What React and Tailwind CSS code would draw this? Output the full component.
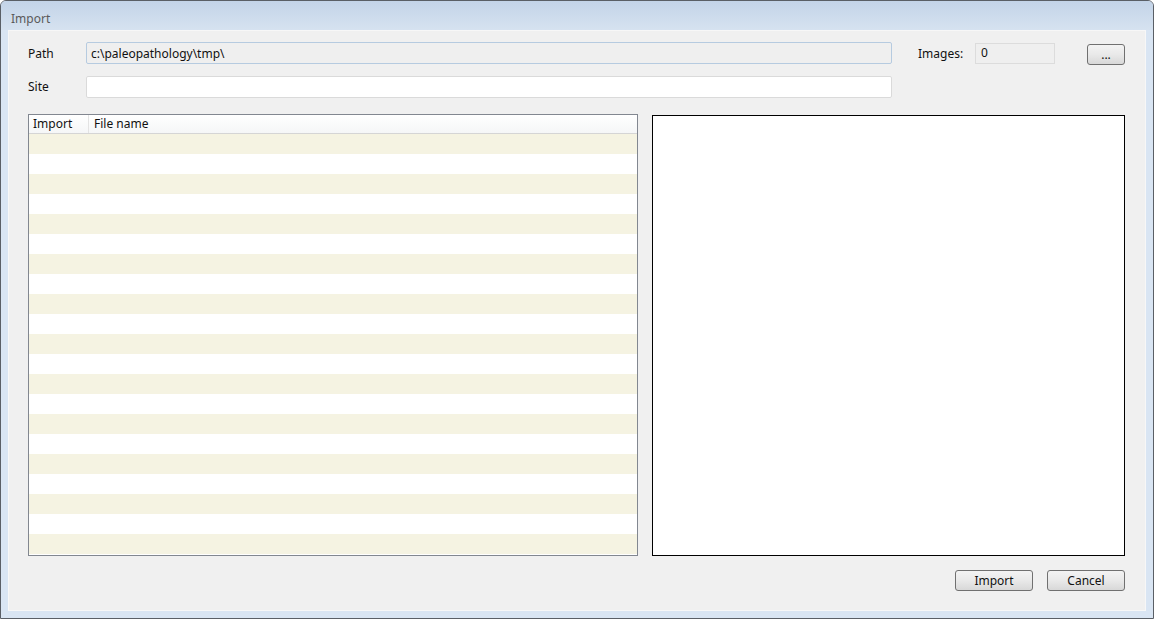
import React from 'react';

const ROWS = 21;

const WinButton = ({ children, className = '' }) => (
  <button
    className={`h-[21px] rounded-[3px] border border-[#707070] bg-gradient-to-b from-[#f3f3f3] via-[#e9e9e9] to-[#d8d8d8] text-[12px] text-[#111] leading-none ${className}`}
  >
    {children}
  </button>
);

const App = () => {
  return (
    <div
      className="w-[1154px] h-[619px] flex flex-col rounded-t-[6px] border border-[#5a5f66] bg-[#d9e5f3] overflow-hidden"
      style={{ fontFamily: '"Noto Sans", "Open Sans", sans-serif' }}
    >
      {/* title bar */}
      <div className="h-[29px] shrink-0 flex items-center pt-[6px] pl-[10px] bg-gradient-to-b from-[#c3d4e8] to-[#d6e2f0]">
        <span className="text-[12px] text-[#5a5a5a]">Import</span>
      </div>

      {/* client area */}
      <div className="flex-1 mx-[7px] mb-[7px] bg-[#f0f0f0] border border-[#f7f7f7] flex flex-col pt-[11px] pl-[19px] pr-[20px]">
        {/* path row */}
        <div className="flex items-center h-[22px]">
          <span className="w-[58px] pt-[2px] text-[12px] text-[#111]">Path</span>
          <div className="w-[806px] h-[22px] border border-[#b6cbe0] rounded-[2px] bg-[#efefef] flex items-center pl-[4px] pt-[1px] text-[12px] text-[#111]">
            c:\paleopathology\tmp\
          </div>
          <span className="ml-[26px] w-[57px] pt-[2px] text-[12px] text-[#111]">Images:</span>
          <div className="w-[80px] h-[21px] border border-[#dcdcdc] bg-[#efefef] flex items-center pl-[5px] text-[12px] text-[#111]">
            0
          </div>
          <WinButton className="ml-[32px] w-[38px] mt-[3px] text-[10px]">...</WinButton>
        </div>

        {/* site row */}
        <div className="flex items-center h-[22px] mt-[12px]">
          <span className="w-[58px] text-[12px] text-[#111]">Site</span>
          <div className="w-[806px] h-[22px] border border-[#dadada] rounded-[2px] bg-white" />
        </div>

        {/* table + preview */}
        <div className="flex mt-[16px] h-[442px]">
          <div className="w-[610px] h-[442px] border border-[#828790] bg-white flex flex-col overflow-hidden">
            <div className="h-[19px] shrink-0 flex items-center border-b border-[#d5d5d5] bg-gradient-to-b from-white to-[#f5f6f7] text-[12px] text-[#111]">
              <div className="w-[60px] h-full pl-[4px] flex items-center border-r border-[#e3e3e3]">Import</div>
              <div className="pl-[5px]">File name</div>
            </div>
            {Array.from({ length: ROWS }).map((_, i) => (
              <div key={i} className={`h-[20px] shrink-0 ${i % 2 === 0 ? 'bg-[#f5f3e2]' : 'bg-white'}`} />
            ))}
          </div>
          <div className="ml-[14px] mt-[1px] w-[473px] h-[441px] border border-black bg-white" />
        </div>

        {/* buttons */}
        <div className="flex justify-end gap-[14px] mt-[14px]">
          <WinButton className="w-[78px]">Import</WinButton>
          <WinButton className="w-[78px]">Cancel</WinButton>
        </div>
      </div>
    </div>
  );
};

export default App;
